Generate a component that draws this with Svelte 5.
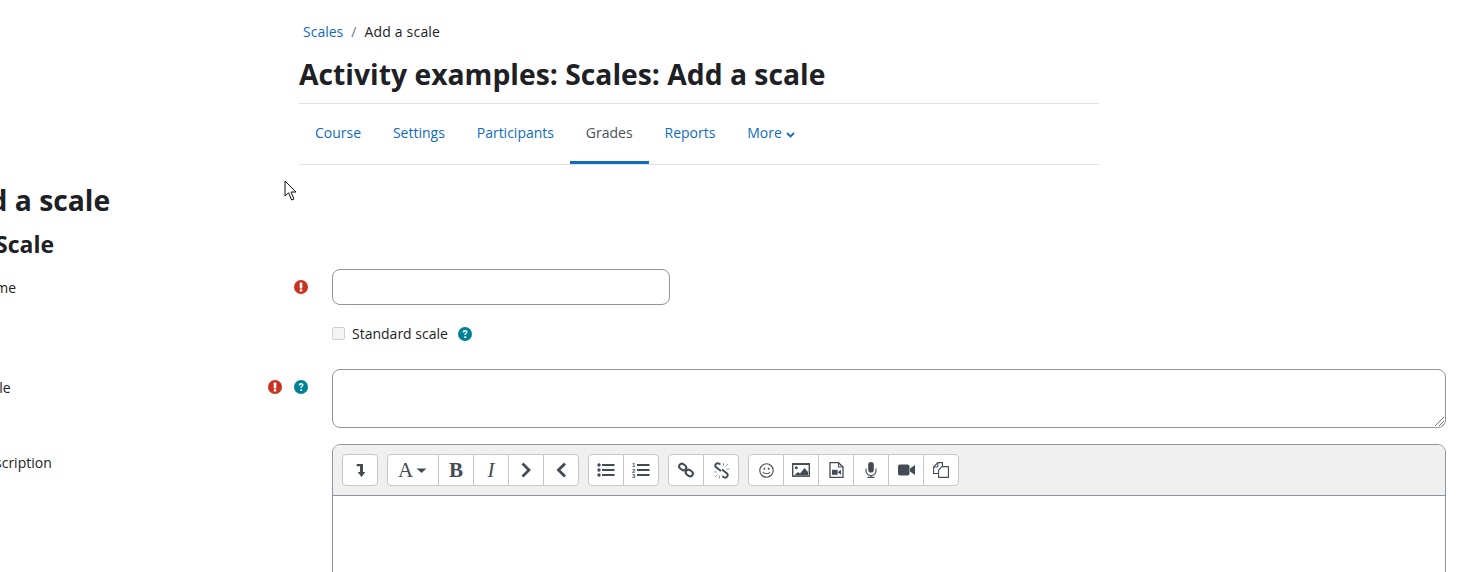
<script>
  const tabs = [
    { label: "Course" },
    { label: "Settings" },
    { label: "Participants" },
    { label: "Grades", active: true },
    { label: "Reports" },
  ];
</script>

<div class="page">
  <div class="top">
    <nav class="crumbs">
      <a href="#s">Scales</a>
      <span class="sep">/</span>
      <span class="here">Add a scale</span>
    </nav>
    <h1>Activity examples: Scales: Add a scale</h1>
    <ul class="tabs">
      {#each tabs as t}
        <li class:active={t.active}>{t.label}</li>
      {/each}
      <li class="more">
        More
        <svg width="9" height="6" viewBox="0 0 9 6"><path d="M1 1l3.5 3.5L8 1" fill="none" stroke="currentColor" stroke-width="1.8" /></svg>
      </li>
    </ul>
  </div>

  <div class="form">
    <h2>Add a scale</h2>
    <h3>Scale</h3>

    <div class="row name">
      <div class="label">
        <span>Name</span>
        <span class="icons">
          <svg class="ic" viewBox="0 0 14 14"><circle cx="7" cy="7" r="7" fill="#ca3120" /><rect x="5.7" y="2.6" width="2.6" height="5.8" rx="0.6" fill="#fff" /><rect x="5.7" y="9.2" width="2.6" height="2.4" rx="0.6" fill="#fff" /></svg>
        </span>
      </div>
      <div class="field"><div class="input short"></div></div>
    </div>

    <div class="row check">
      <div class="label"></div>
      <div class="field checkline">
        <span class="box"></span>
        <span>Standard scale</span>
        <svg class="ic" viewBox="0 0 14 14"><circle cx="7" cy="7" r="7" fill="#008196" /><path d="M4.6 5.3c.1-1.4 1.1-2.2 2.5-2.2s2.4.8 2.4 2c0 1.6-1.9 1.6-1.9 3H6.3c0-2 1.7-2 1.7-2.9 0-.5-.4-.8-.9-.8-.6 0-.9.4-1 1z" fill="#fff" /><rect x="6.3" y="9.2" width="1.9" height="1.9" rx="0.3" fill="#fff" /></svg>
      </div>
    </div>

    <div class="row scale">
      <div class="label">
        <span>Scale</span>
        <span class="icons">
          <svg class="ic" viewBox="0 0 14 14"><circle cx="7" cy="7" r="7" fill="#ca3120" /><rect x="5.7" y="2.6" width="2.6" height="5.8" rx="0.6" fill="#fff" /><rect x="5.7" y="9.2" width="2.6" height="2.4" rx="0.6" fill="#fff" /></svg>
          <svg class="ic" viewBox="0 0 14 14"><circle cx="7" cy="7" r="7" fill="#008196" /><path d="M4.6 5.3c.1-1.4 1.1-2.2 2.5-2.2s2.4.8 2.4 2c0 1.6-1.9 1.6-1.9 3H6.3c0-2 1.7-2 1.7-2.9 0-.5-.4-.8-.9-.8-.6 0-.9.4-1 1z" fill="#fff" /><rect x="6.3" y="9.2" width="1.9" height="1.9" rx="0.3" fill="#fff" /></svg>
        </span>
      </div>
      <div class="field">
        <div class="input area">
          <svg class="grip" width="12" height="12" viewBox="0 0 12 12"><path d="M11 2L2 11M11 6l-5 5M11 9l-2 2" stroke="#777" stroke-width="1" fill="none" /></svg>
        </div>
      </div>
    </div>

    <div class="row desc">
      <div class="label"><span>Description</span></div>
      <div class="field">
        <div class="editor">
          <div class="toolbar">
            <div class="group"><button aria-label="more"><svg width="14" height="14" viewBox="0 0 14 14"><path d="M3.7 1H10v8h2.4L8.5 14 4.7 9H7V3.2H3.7z" fill="#444b54" /></svg></button></div>
            <div class="group">
              <button class="wide" aria-label="font"><svg width="30" height="16" viewBox="0 0 30 16"><text x="0" y="14.5" font-family="Liberation Serif" font-size="21" fill="#444b54">A</text><path d="M18.500 6.500h10l-5 4.500z" fill="#444b54" /></svg></button>
              <button aria-label="bold"><span class="b">B</span></button>
              <button aria-label="italic"><span class="i">I</span></button>
              <button aria-label="indent"><svg width="16" height="16" viewBox="0 0 16 16"><path d="M4.500 1.500L11 8l-6.500 6.500" fill="none" stroke="#444b54" stroke-width="2.8" /></svg></button>
              <button aria-label="outdent"><svg width="16" height="16" viewBox="0 0 16 16"><path d="M12 1.500L5.500 8l6.500 6.500" fill="none" stroke="#444b54" stroke-width="2.8" /></svg></button>
            </div>
            <div class="group">
              <button aria-label="bullets"><svg width="18" height="14" viewBox="0 0 18 14"><circle cx="2" cy="2" r="1.7" fill="#444b54" /><circle cx="2" cy="7" r="1.7" fill="#444b54" /><circle cx="2" cy="12" r="1.7" fill="#444b54" /><path d="M5 2h12.500M5 7h12.500M5 12h12.500" stroke="#444b54" stroke-width="2.2" /></svg></button>
              <button aria-label="numbers"><svg width="18" height="16" viewBox="0 0 18 16"><text x="0" y="5.200" font-size="6" font-weight="700" font-family="Liberation Sans" fill="#444b54">1</text><text x="0" y="10.600" font-size="6" font-weight="700" font-family="Liberation Sans" fill="#444b54">2</text><text x="0" y="16" font-size="6" font-weight="700" font-family="Liberation Sans" fill="#444b54">3</text><path d="M5 3h12.500M5 8h12.500M5 13h12.500" stroke="#444b54" stroke-width="2.2" /></svg></button>
            </div>
            <div class="group">
              <button aria-label="link"><svg width="16" height="16" viewBox="0 0 16 16"><g fill="none" stroke="#444b54" stroke-width="2.1"><rect x="1" y="2.300" width="7.400" height="5.400" rx="2.700" transform="rotate(38 4.700 5)" /><rect x="7.600" y="8.300" width="7.400" height="5.400" rx="2.700" transform="rotate(38 11.300 11)" /></g></svg></button>
              <button aria-label="unlink"><svg width="17" height="17" viewBox="0 0 17 17"><g fill="none" stroke="#444b54" stroke-width="1.900"><path d="M7.500 2.500L5.800 1.500a2.400 2.400 0 0 0-3 3.600L8 9" /><path d="M9 7.500l5 4a2.400 2.400 0 0 1-3 3.700L9.300 14" /></g><path d="M10.500 1v3M15 2l-2.500 2.500M16.500 7h-3M1 10h3M2 15l2.500-2.500M6.500 16.500v-3" stroke="#9aa0a6" stroke-width="1" /></svg></button>
            </div>
            <div class="group">
              <button aria-label="emoji"><svg width="15" height="15" viewBox="0 0 15 15"><circle cx="7.500" cy="7.500" r="6.700" fill="none" stroke="#444b54" stroke-width="1.100" /><circle cx="5.300" cy="5.700" r="1" fill="#444b54" /><circle cx="9.700" cy="5.700" r="1" fill="#444b54" /><path d="M4 9c1.500 2.400 5.500 2.400 7 0" fill="none" stroke="#444b54" stroke-width="1.100" /></svg></button>
              <button aria-label="image"><svg width="18" height="14" viewBox="0 0 18 14"><rect x="0.700" y="0.800" width="16.600" height="12.400" fill="none" stroke="#444b54" stroke-width="1.400" /><path d="M0 .5h18v1.500H0z" fill="#444b54" /><circle cx="4.300" cy="4.700" r="1.500" fill="#444b54" /><path d="M2 12.500l4-3.500 2 1.500 4.500-5.500 3.500 4v3.500z" fill="#444b54" /></svg></button>
              <button aria-label="media"><svg width="15" height="16" viewBox="0 0 15 16"><path d="M1 .7h8.500L14 5v10.300H1z" fill="none" stroke="#444b54" stroke-width="1.300" /><path d="M9.500 .7V5H14" fill="none" stroke="#444b54" stroke-width="1.100" /><rect x="3" y="7.800" width="5.600" height="5" fill="#444b54" /><path d="M8.600 10.300l3.400-2.500v5z" fill="#444b54" /></svg></button>
              <button aria-label="audio"><svg width="12" height="16" viewBox="0 0 12 16"><rect x="3.200" y="0" width="5.600" height="10.500" rx="2.800" fill="#444b54" /><path d="M1 6.500v2a5 5 0 0 0 10 0v-2M6 13.500v1.500M2.500 15.400h7" fill="none" stroke="#444b54" stroke-width="1.100" /></svg></button>
              <button aria-label="video"><svg width="17" height="12" viewBox="0 0 17 12"><rect x="0" y="0.500" width="11.500" height="11" rx="2" fill="#444b54" /><path d="M12 4.500L17 1v10l-5-3.500z" fill="#444b54" /></svg></button>
              <button aria-label="manage"><svg width="16" height="16" viewBox="0 0 16 16"><path d="M5.500 11.500H.6V5L4.800.6h4.700v4" fill="none" stroke="#444b54" stroke-width="1.100" /><path d="M4.800.6V5H.6" fill="none" stroke="#444b54" stroke-width="1" /><path d="M9 4.600h6.400v10.800H5.600V8z" fill="#fff" stroke="#444b54" stroke-width="1.100" /></svg></button>
            </div>
          </div>
          <div class="body"></div>
        </div>
      </div>
    </div>
  </div>

  <svg class="cursor" width="15" height="21" viewBox="0 0 15 21"><path d="M1 1v15l3.6-3.2L7.6 20l2.400-1-3-7h5z" fill="#fff" stroke="#111" stroke-width="1" /></svg>
</div>

<style>
  :global(body) {
    margin: 0;
    background: #fff;
  }

  .page {
    position: relative;
    width: 1479px;
    height: 572px;
    overflow: hidden;
    font-family: "Open Sans", "Noto Sans", sans-serif;
    font-size: 14px;
    color: #1d2125;
  }

  .top {
    width: 800px;
    margin-left: 299px;
    padding-top: 21px;
  }

  .crumbs {
    display: flex;
    gap: 8px;
    padding-left: 4px;
    line-height: 21px;
    font-size: 14px;
  }

  .crumbs a {
    color: #0f6cbf;
    text-decoration: none;
  }

  .sep {
    color: #6a737b;
  }

  .here {
    letter-spacing: 0.2px;
  }

  h1 {
    margin: 15px 0 0;
    font-size: 28.3px;
    line-height: 34px;
    font-weight: 700;
    padding-bottom: 12px;
    border-bottom: 1px solid #dee2e6;
  }

  .tabs {
    display: flex;
    list-style: none;
    margin: 0;
    padding: 0;
    height: 60px;
    border-bottom: 1px solid #dee2e6;
  }

  .tabs li {
    padding: 0 15.95px;
    line-height: 58px;
    color: #0f6cbf;
    box-sizing: border-box;
    height: 60px;
  }

  .tabs li.active {
    color: #495057;
    border-bottom: 3px solid #0f6cbf;
  }

  .form {
    margin-left: -23px;
    margin-top: 15px;
  }

  h2 {
    margin: 0 0 0 -25px;
    font-size: 28.3px;
    line-height: 40px;
    font-weight: 700;
  }

  h3 {
    margin: 10px 0 0 18px;
    font-size: 23px;
    line-height: 28px;
    font-weight: 700;
  }

  .row {
    display: grid;
    grid-template-columns: 355px 1114px;
  }

  .label {
    display: flex;
    justify-content: space-between;
    padding: 8px 24px 0 0;
    line-height: 21px;
    box-sizing: border-box;
  }

  .icons {
    display: flex;
    gap: 12px;
  }

  .ic {
    width: 14px;
    height: 14px;
    margin-top: 3px;
  }

  .name {
    margin-top: 11px;
  }

  .input {
    border: 1px solid #8f959e;
    border-radius: 8px;
    box-sizing: border-box;
  }

  .short {
    width: 338px;
    height: 36px;
  }

  .check {
    margin-top: 18px;
  }

  .check .label {
    padding: 0;
  }

  .checkline {
    display: flex;
    align-items: center;
    height: 21px;
    gap: 7px;
  }

  .checkline .ic {
    margin: 0 0 0 3px;
  }

  .box {
    width: 13px;
    height: 13px;
    box-sizing: border-box;
    border: 1px solid #cdd0d4;
    border-radius: 2px;
    background: #f5f5f5;
  }

  .scale {
    margin-top: 25px;
  }

  .area {
    position: relative;
    height: 59px;
  }

  .grip {
    position: absolute;
    right: 0;
    bottom: 0;
  }

  .desc {
    margin-top: 16px;
  }

  .editor {
    border: 1px solid #8f959e;
    border-radius: 8px;
    height: 200px;
    overflow: hidden;
  }

  .toolbar {
    display: flex;
    gap: 9px;
    height: 51px;
    padding: 9px 0 0 9px;
    box-sizing: border-box;
    background: #f0f0f0;
    border-bottom: 1px solid #8f959e;
  }

  .group {
    display: flex;
    height: 32px;
    border: 1px solid #c7c7c7;
    border-radius: 4px;
    background: #fff;
    box-sizing: border-box;
  }

  .group button {
    width: 35px;
    height: 30px;
    padding: 0;
    border: 0;
    border-left: 1px solid #c7c7c7;
    background: none;
    display: flex;
    align-items: center;
    justify-content: center;
  }

  .group button:first-child {
    border-left: 0;
    width: 34px;
  }

  .group button.wide {
    width: 50px;
  }

  .b, .i {
    font-family: "Liberation Serif", serif;
    font-size: 21px;
    color: #444b54;
    line-height: 1;
  }

  .b {
    font-weight: 700;
  }

  .i {
    font-style: italic;
  }

  .cursor {
    position: absolute;
    left: 284px;
    top: 180px;
  }
</style>
